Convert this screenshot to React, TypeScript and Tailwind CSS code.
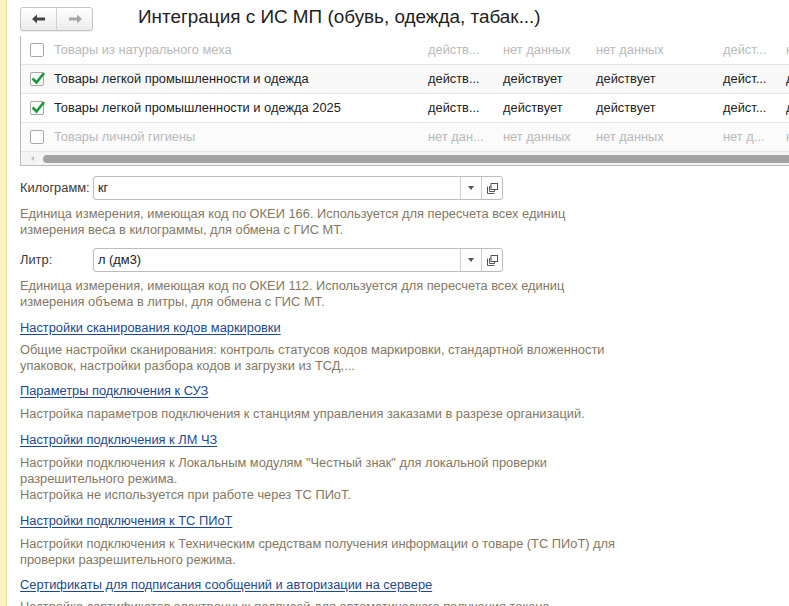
import React from 'react';

const font = { fontFamily: '"Liberation Sans", Arial, sans-serif' };

type Row = { name: string; on: boolean; cells: string[] };

const rows: Row[] = [
  { name: 'Товары из натурального меха', on: false, cells: ['действ...', 'нет данных', 'нет данных', 'дейст...', 'н'] },
  { name: 'Товары легкой промышленности и одежда', on: true, cells: ['действ...', 'действует', 'действует', 'дейст...', 'д'] },
  { name: 'Товары легкой промышленности и одежда 2025', on: true, cells: ['действ...', 'действует', 'действует', 'дейст...', 'д'] },
  { name: 'Товары личной гигиены', on: false, cells: ['нет дан...', 'нет данных', 'нет данных', 'нет д...', 'н'] },
];

const Check = ({ on }: { on: boolean }) => (
  <span className="relative w-[14px] h-[14px] shrink-0 border border-[#a9a9a9] rounded-[2px] bg-white">
    {on && (
      <svg viewBox="0 0 16 16" className="absolute -left-[1px] -top-[3px] w-[16px] h-[16px]">
        <path d="M2.5 8.5 L6.5 12.5 L14 3" fill="none" stroke="#1b9a3c" strokeWidth="2.6" />
      </svg>
    )}
  </span>
);

const Field = ({ label, value }: { label: string; value: string }) => (
  <div className="flex items-center h-[24px]">
    <span className="w-[73px] text-[#3a3a3a]">{label}</span>
    <div className="flex w-[410px] h-[24px] border border-[#bdbdbd] rounded-[3px] bg-white">
      <span className="flex-1 pl-[4px] leading-[22px] text-[#222]">{value}</span>
      <span className="w-[21px] border-l border-[#cfcfcf] flex items-center justify-center">
        <svg viewBox="0 0 6 4" className="w-[6px] h-[4px]"><path d="M0 0 H6 L3 4 Z" fill="#555" /></svg>
      </span>
      <span className="w-[21px] border-l border-[#cfcfcf] flex items-center justify-center">
        <svg viewBox="0 0 11 11" className="w-[11px] h-[11px]">
          <rect x="4" y="0.5" width="6.5" height="6" fill="none" stroke="#555" />
          <path d="M0.5 3.5 V10.5 H7.5" fill="none" stroke="#555" />
          <path d="M2.5 3.5 H4 M2.5 3.5 V8.5 M2.5 8.5 H7.5 V6.5" fill="none" stroke="#555" />
        </svg>
      </span>
    </div>
  </div>
);

const Link = ({ children }: { children: React.ReactNode }) => (
  <a className="text-[#1c4a8c] underline underline-offset-[2px] decoration-[#1c4a8c]">{children}</a>
);

const Desc = ({ children }: { children: React.ReactNode }) => (
  <p className="text-[#847863] leading-[16px]">{children}</p>
);

export default function App() {
  return (
    <div style={font} className="w-[789px] h-[606px] overflow-hidden bg-white flex text-[12.85px]">
      <div className="w-[7px] shrink-0 bg-[#fcf2c2] border-r border-[#eadf9f]" />
      <div className="flex-1 pl-[13px] relative">
        {/* header */}
        <div className="flex items-center h-[38px]">
          <div className="flex h-[24px] w-[73px] border border-[#c4c4c4] rounded-[3px] bg-gradient-to-b from-white to-[#ececec] shadow-[0_1px_1px_rgba(0,0,0,0.08)]">
            <span className="flex-1 flex items-center justify-center border-r border-[#d0d0d0]">
              <svg viewBox="0 0 14 10" className="w-[14px] h-[10px]"><path d="M0 5 L5 0.5 V3.5 H13 V6.5 H5 V9.5 Z" fill="#444" /></svg>
            </span>
            <span className="flex-1 flex items-center justify-center">
              <svg viewBox="0 0 14 10" className="w-[14px] h-[10px]"><path d="M14 5 L9 0.5 V3.5 H1 V6.5 H9 V9.5 Z" fill="#a8a8a8" /></svg>
            </span>
          </div>
          <h1 className="ml-[45px] text-[18.9px] text-[#222] -mt-[4px]">Интеграция с ИС МП (обувь, одежда, табак...)</h1>
        </div>

        {/* table */}
        <div className="border-l border-b border-[#bcbcbc] -mt-[2px]">
          {rows.map((r, i) => (
            <div
              key={i}
              className={`flex items-center h-[29px] border-b border-[#e4e4e4] ${i === 1 ? 'bg-[#f8f8f8]' : i === 3 ? 'bg-[#fbfbfb]' : 'bg-white'} ${r.on ? 'text-[#222]' : 'text-[#b9b9b9]'}`}
            >
              <span className="w-[33px] pl-[9px] flex"><Check on={r.on} /></span>
              <span className="w-[374px] whitespace-nowrap">{r.name}</span>
              <span className="w-[75px] whitespace-nowrap">{r.cells[0]}</span>
              <span className="w-[93px] whitespace-nowrap">{r.cells[1]}</span>
              <span className="w-[127px] whitespace-nowrap">{r.cells[2]}</span>
              <span className="w-[63px] whitespace-nowrap">{r.cells[3]}</span>
              <span className="whitespace-nowrap">{r.cells[4]}</span>
            </div>
          ))}
          <div className="flex items-center h-[13px] bg-[#f4f4f4]">
            <span className="w-[22px] flex justify-center">
              <svg viewBox="0 0 3 5" className="w-[3px] h-[5px]"><path d="M3 0 V5 L0 2.5 Z" fill="#bbb" /></svg>
            </span>
            <span className="flex-1 h-[8px] rounded-l-full bg-[#a3a3a3]" />
          </div>
        </div>

        {/* fields */}
        <div className="mt-[10px]">
          <Field label="Килограмм:" value="кг" />
          <div className="mt-[6px]">
            <Desc>Единица измерения, имеющая код по ОКЕИ 166. Используется для пересчета всех единиц<br />измерения веса в килограммы, для обмена с ГИС МТ.</Desc>
          </div>
          <div className="mt-[10px]">
            <Field label="Литр:" value="л (дм3)" />
          </div>
          <div className="mt-[6px]">
            <Desc>Единица измерения, имеющая код по ОКЕИ 112. Используется для пересчета всех единиц<br />измерения объема в литры, для обмена с ГИС МТ.</Desc>
          </div>
        </div>

        {/* links */}
        <div className="mt-[10px] flex flex-col">
          <div className="leading-[16px]"><Link>Настройки сканирования кодов маркировки</Link></div>
          <div className="mt-[6px]">
            <Desc>Общие настройки сканирования: контроль статусов кодов маркировки, стандартной вложенности<br />упаковок, настройки разбора кодов и загрузки из ТСД,...</Desc>
          </div>
          <div className="mt-[9px] leading-[16px]"><Link>Параметры подключения к СУЗ</Link></div>
          <div className="mt-[7px]">
            <Desc>Настройка параметров подключения к станциям управления заказами в разрезе организаций.</Desc>
          </div>
          <div className="mt-[10px] leading-[16px]"><Link>Настройки подключения к ЛМ ЧЗ</Link></div>
          <div className="mt-[7px]">
            <Desc>Настройки подключения к Локальным модулям "Честный знак" для локальной проверки<br />разрешительного режима.<br />Настройка не используется при работе через ТС ПИоТ.</Desc>
          </div>
          <div className="mt-[10px] leading-[16px]"><Link>Настройки подключения к ТС ПИоТ</Link></div>
          <div className="mt-[7px]">
            <Desc>Настройки подключения к Техническим средствам получения информации о товаре (ТС ПИоТ) для<br />проверки разрешительного режима.</Desc>
          </div>
          <div className="mt-[9px] leading-[16px]"><Link>Сертификаты для подписания сообщений и авторизации на сервере</Link></div>
          <div className="mt-[6px]">
            <Desc>Настройка сертификатов электронных подписей для автоматического получения токена</Desc>
          </div>
        </div>
      </div>
    </div>
  );
}
